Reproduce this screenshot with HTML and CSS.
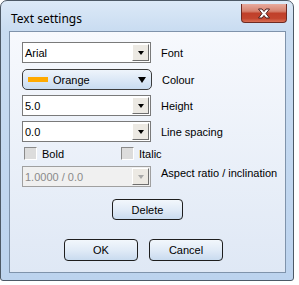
FILE: index.html
```html
<!DOCTYPE html>
<html lang="en">
<head>
<meta charset="UTF-8">
<title>Text settings</title>
<link rel="stylesheet" href="styles.css">
</head>
<body>
<div class="window">
  <div class="titlebar">
    <span class="title">Text settings</span>
    <button class="close">
      <svg width="14" height="11" viewBox="0 0 14 11">
        <path d="M1.5 1 H5 L7 3.5 L9 1 H12.5 L9 5.5 L12.5 10 H9 L7 7.5 L5 10 H1.5 L5 5.5 Z" fill="#fff" stroke="#4a2020" stroke-width="1"/>
      </svg>
    </button>
  </div>

  <div class="client">
    <div class="row first">
      <div class="combo"><span class="value">Arial</span><span class="drop"></span></div>
      <span class="label">Font</span>
    </div>
    <div class="row">
      <button class="colour-btn"><span class="swatch"></span><span class="cname">Orange</span><span class="tri"></span></button>
      <span class="label">Colour</span>
    </div>
    <div class="row">
      <div class="combo"><span class="value">5.0</span><span class="drop"></span></div>
      <span class="label">Height</span>
    </div>
    <div class="row">
      <div class="combo"><span class="value">0.0</span><span class="drop"></span></div>
      <span class="label">Line spacing</span>
    </div>
    <div class="checks">
      <label class="check"><span class="box"></span>Bold</label>
      <label class="check"><span class="box"></span>Italic</label>
    </div>
    <div class="row aspect">
      <div class="combo disabled"><span class="value">1.0000 / 0.0</span><span class="drop"></span></div>
      <span class="label">Aspect ratio / inclination</span>
    </div>
    <div class="delete-row">
      <button class="btn delete">Delete</button>
    </div>
    <div class="actions">
      <button class="btn">OK</button>
      <button class="btn">Cancel</button>
    </div>
  </div>
</div>
</body>
</html>
```

FILE: styles.css
```css
body {
  margin: 0;
  padding: 0;
  background: #fff;
  font-family: "Liberation Sans", Arial, sans-serif;
  font-size: 11px;
  color: #000;
}

.window {
  width: 292px;
  height: 279px;
  border: 1px solid #4d5966;
  border-radius: 7px 7px 3px 3px;
  background: linear-gradient(to bottom, #dce9f7 0px, #c9dcf1 30px, #bcd3ee 100%);
  display: flex;
  flex-direction: column;
}

.titlebar {
  height: 30px;
  display: flex;
  align-items: flex-start;
  justify-content: space-between;
}

.title {
  font-family: "Noto Sans", "Open Sans", sans-serif;
  font-size: 12px;
  margin: 9px 0 0 10px;
  color: #000;
}

.close {
  width: 46px;
  height: 19px;
  margin: 3px 6px 0 0;
  padding: 0;
  border: 1px solid #6e2a22;
  border-top: none;
  border-radius: 0 0 4px 4px;
  background: linear-gradient(to bottom, #e8ab9e 0%, #d6826f 40%, #c0402a 52%, #c3452e 80%, #d86f55 100%);
  display: flex;
  align-items: center;
  justify-content: center;
}

.client {
  flex: 1;
  margin: 0 7px 7px 8px;
  border: 1px solid #7f93ab;
  background: linear-gradient(to bottom, #f7f9fd 0%, #dfe8f5 100%);
  padding: 10px 0 0 12px;
}

.row {
  display: flex;
  align-items: center;
  height: 21px;
  margin-bottom: 5px;
}

.row.first {
  margin-bottom: 6px;
}

.label {
  margin-left: 10px;
}

.combo {
  width: 127px;
  height: 19px;
  border: 1px solid #7a7a7a;
  background: #fff;
  display: flex;
  align-items: center;
  justify-content: space-between;
}

.combo .value {
  padding-left: 2px;
}

.drop {
  width: 15px;
  height: 15px;
  margin-right: 1px;
  background: #ece9e3;
  border: 1px solid;
  border-color: #fff #6e6e6e #6e6e6e #fff;
  display: flex;
  align-items: center;
  justify-content: center;
}

.drop::after {
  content: "";
  border-top: 4px solid #000;
  border-left: 3.5px solid transparent;
  border-right: 3.5px solid transparent;
  margin-top: 1px;
}

.combo.disabled {
  background: #f0f0f0;
  color: #8a8a8a;
  border-color: #a0a0a0;
}

.combo.disabled .drop::after {
  border-top-color: #a8a8a8;
}

.colour-btn {
  width: 130px;
  height: 21px;
  border: 1px solid #3c3c3c;
  border-radius: 5px;
  background: linear-gradient(to bottom, #eef4fb 0%, #dce8f6 50%, #c8dbf0 100%);
  display: flex;
  align-items: center;
  padding: 0 0 0 5px;
  font-family: "Liberation Sans", Arial, sans-serif;
  font-size: 11px;
}

.swatch {
  width: 20px;
  height: 5px;
  background: #ffaa00;
  margin-right: 5px;
}

.cname {
  flex: 1;
  text-align: left;
}

.tri {
  border-top: 6px solid #000;
  border-left: 4px solid transparent;
  border-right: 4px solid transparent;
  margin-right: 5px;
}

.checks {
  display: flex;
  height: 13px;
  margin: 5px 0 6px 2px;
}

.check {
  display: flex;
  align-items: center;
  width: 97px;
}

.box {
  width: 11px;
  height: 11px;
  border: 1px solid;
  border-color: #8a8a8a #fff #fff #8a8a8a;
  background: #dcdcdc;
  margin-right: 5px;
}

.aspect {
  margin-bottom: 12px;
}

.aspect .label {
  align-self: flex-start;
  margin-top: 1px;
}

.delete-row {
  display: flex;
  padding-left: 90px;
  margin-bottom: 19px;
}

.btn {
  width: 71px;
  height: 21px;
  border: 1px solid #1e1e1e;
  border-radius: 4px;
  background: linear-gradient(to bottom, #f2f7fc 0%, #e1ebf7 50%, #c9dbef 100%);
  font-family: "Liberation Sans", Arial, sans-serif;
  font-size: 11px;
  padding: 0;
}

.actions {
  display: flex;
  gap: 11px;
  padding-left: 42px;
}

.actions .btn {
  width: 74px;
  height: 22px;
}
```
